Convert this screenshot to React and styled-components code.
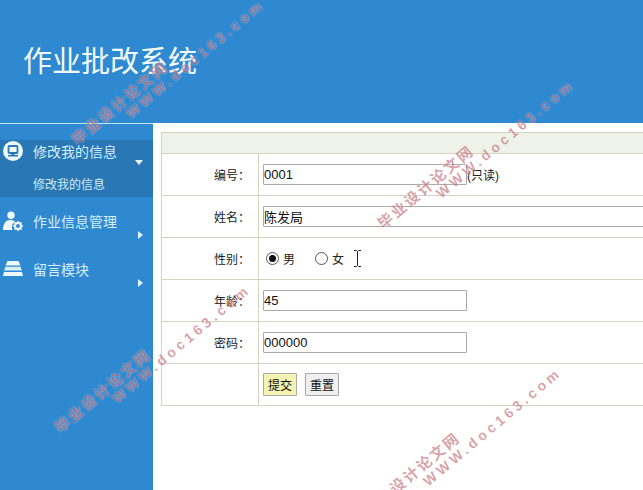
import React from "react";
import styled, { createGlobalStyle } from "styled-components";

const GlobalStyle = createGlobalStyle`
  html, body {
    margin: 0;
    padding: 0;
    height: 100%;
    overflow: hidden;
    background: #fff;
  }
  body {
    font-family: "Liberation Sans", "Noto Sans CJK SC", sans-serif;
    font-size: 12px;
    color: #222;
  }
`;

const Page = styled.div`
  position: relative;
  width: 643px;
  height: 490px;
  overflow: hidden;
`;

const Header = styled.header`
  height: 123px;
  box-sizing: border-box;
  padding: 44px 0 0 23px;
  background: #2f89d1;
`;

const Title = styled.h1`
  margin: 0;
  font-family: "Liberation Serif", "Noto Sans CJK SC", serif;
  font-size: 29px;
  line-height: 36px;
  font-weight: 400;
  color: #f2fbff;
`;

const Body = styled.div`
  display: flex;
  height: 367px;
`;

const Sidebar = styled.nav`
  flex: 0 0 153px;
  box-sizing: border-box;
  padding-top: 16px;
  border-top: 1px solid #bfeaf5;
  background: #2f89d1;
`;

const MenuGroup = styled.div`
  height: ${(p) => p.$height}px;
  background: ${(p) => (p.$open ? "#2a77b5" : "transparent")};
`;

const MenuHead = styled.div`
  position: relative;
  display: flex;
  align-items: center;
  gap: 10px;
  height: 22px;
  padding: ${(p) => p.$top}px 0 0 3px;
  color: #d3f0fb;
  font-size: 14px;
`;

const MenuIcon = styled.svg`
  flex: 0 0 20px;
  width: 20px;
  height: 20px;
`;

const Arrow = styled.i`
  position: absolute;
  width: 0;
  height: 0;
  border-style: solid;
  ${(p) =>
    p.$down
      ? `right: 10px; top: 20px;
         border-width: 5px 4px 0 4px;
         border-color: #e4f6fc transparent transparent transparent;`
      : `right: 10px; top: 34px;
         border-width: 4.500px 0 4.500px 5px;
         border-color: transparent transparent transparent #e4f6fc;`}
`;

const SubItem = styled.div`
  padding: 14px 0 0 33px;
  color: #cdebf7;
  font-size: 12px;
  line-height: 18px;
`;

const Main = styled.main`
  flex: 1;
  min-width: 0;
  padding: 9px 0 0 8px;
`;

const Table = styled.table`
  width: 560px;
  border-collapse: collapse;
  table-layout: fixed;
`;

const LabelColumn = styled.col`
  width: 97px;
`;

const HeadCell = styled.td`
  height: 20px;
  padding: 0;
  border: 1px solid #d3d3bf;
  background: #eef2e9;
`;

const Row = styled.tr`
  height: 42px;
`;

const LabelCell = styled.td`
  box-sizing: border-box;
  padding: 0 8px 0 0;
  border: 1px solid #d3d3bf;
  text-align: right;
  font-size: 12px;
`;

const FieldCell = styled.td`
  padding: 0 0 0 4px;
  border: 1px solid #d3d3bf;
  white-space: nowrap;
  font-size: 12px;
`;

const TextInput = styled.input`
  width: ${(p) => p.$width}px;
  height: 21px;
  box-sizing: border-box;
  margin: 0;
  padding: 0;
  border: 1px solid #a9a9a9;
  border-radius: 1px;
  background: #fff;
  color: #111;
  font-family: "Liberation Sans", "Noto Sans CJK SC", sans-serif;
  font-size: 13px;
  vertical-align: middle;
`;

const Note = styled.span`
  vertical-align: -2px;
`;

const RadioLabel = styled.label`
  display: inline-flex;
  align-items: center;
  gap: 4px;
  margin: 0 20px 0 3px;
  font-size: 12px;
  vertical-align: middle;
  &:last-of-type {
    margin-left: 0;
    margin-right: 0;
  }
`;

const RadioDot = styled.span`
  position: relative;
  width: 11px;
  height: 11px;
  border: 1px solid #555;
  border-radius: 50%;
  background: #fff;
  ${(p) =>
    p.$checked &&
    `&::after {
      content: "";
      position: absolute;
      left: 2px;
      top: 2px;
      width: 7px;
      height: 7px;
      border-radius: 50%;
      background: #111;
    }`}
`;

const TextCursor = styled.svg`
  width: 9px;
  height: 17px;
  margin-left: 9px;
  vertical-align: middle;
`;

const Button = styled.button`
  width: 34px;
  height: 23px;
  box-sizing: border-box;
  margin: 0 8px 0 0;
  padding: 0;
  border: 1px solid #a9a9a9;
  border-radius: 1px;
  background: ${(p) => (p.$primary ? "#f5f3b0" : "#efeff0")};
  color: #111;
  font-family: "Liberation Sans", "Noto Sans CJK SC", sans-serif;
  font-size: 12px;
  vertical-align: middle;
`;

// the watermark sits over the page, so its red turns purple on the blue parts
const Stamp = styled.span`
  position: absolute;
  left: ${(p) => p.$x}px;
  top: ${(p) => p.$y}px;
  transform: rotate(-40deg);
  transform-origin: left center;
  white-space: nowrap;
  font-family: "Liberation Sans", "Noto Sans CJK SC", sans-serif;
  font-weight: 700;
  line-height: 16px;
  pointer-events: none;
  color: rgba(175, 55, 70, 0.48);
  text-shadow: 0 0 2px rgba(255, 255, 255, 0.55);
  font-size: ${(p) => (p.$url ? 14 : 15)}px;
  letter-spacing: ${(p) => (p.$url ? 3.7 : 2.2)}px;
`;

const stamps = [
  { x: 74, y: 134 },
  { x: 128, y: 107, url: true },
  { x: 380, y: 218 },
  { x: 438, y: 187, url: true },
  { x: 57, y: 422 },
  { x: 114, y: 392, url: true },
  { x: 366, y: 505 },
  { x: 425, y: 475, url: true },
];

function ScreenIcon() {
  return (
    <MenuIcon viewBox="0 0 20 20">
      <circle cx="10" cy="10" r="10" fill="#eef9fd" />
      <rect x="5.500" y="5" width="9" height="7" rx="1" fill="none" stroke="#2a77b5" strokeWidth="1.800" />
      <path d="M8.500 12.500h3v1.500h-3zM5 14h10v1.600H5z" fill="#2a77b5" />
    </MenuIcon>
  );
}

function UserGearIcon() {
  return (
    <MenuIcon viewBox="0 0 20 20">
      <circle cx="8" cy="4.200" r="3.700" fill="#eef9fd" />
      <path d="M0 19c0-6 2.500-10 7.500-10 2 0 3.500.6 4.600 1.700-2.600 1.400-3.800 5-2.600 8.300z" fill="#eef9fd" />
      <circle cx="15" cy="15" r="3" fill="none" stroke="#eef9fd" strokeWidth="2" />
      <path d="M15 10v2M15 18v2M10 15h2M18 15h2M11.500 11.500l1.400 1.400M17.100 17.100l1.400 1.400M18.500 11.500l-1.400 1.400M12.900 17.100l-1.400 1.400" stroke="#eef9fd" strokeWidth="1.600" />
    </MenuIcon>
  );
}

function LayersIcon() {
  return (
    <MenuIcon viewBox="0 0 20 20">
      <path d="M4.500 2h11l2 4.500H2.500z" fill="#eef9fd" />
      <path d="M2.500 7.800h15l1.500 3.700H1z" fill="#d7f0fa" />
      <path d="M1 13h18l1 4H0z" fill="#eef9fd" />
    </MenuIcon>
  );
}

export default function App() {
  return (
    <Page>
      <GlobalStyle />
      <Header>
        <Title>作业批改系统</Title>
      </Header>
      <Body>
        <Sidebar>
          <MenuGroup $open $height={57}>
            <MenuHead $top={0}>
              <ScreenIcon />
              修改我的信息
              <Arrow $down />
            </MenuHead>
            <SubItem>修改我的信息</SubItem>
          </MenuGroup>
          <MenuGroup $height={48}>
            <MenuHead $top={13}>
              <UserGearIcon />
              作业信息管理
              <Arrow />
            </MenuHead>
          </MenuGroup>
          <MenuGroup $height={48}>
            <MenuHead $top={13}>
              <LayersIcon />
              留言模块
              <Arrow />
            </MenuHead>
          </MenuGroup>
        </Sidebar>
        <Main>
          <Table>
            <colgroup>
              <LabelColumn />
              <col />
            </colgroup>
            <tbody>
              <tr>
                <HeadCell colSpan={2} />
              </tr>
              <Row>
                <LabelCell>编号：</LabelCell>
                <FieldCell>
                  <TextInput $width={204} defaultValue="0001" readOnly />
                  <Note>(只读)</Note>
                </FieldCell>
              </Row>
              <Row>
                <LabelCell>姓名：</LabelCell>
                <FieldCell>
                  <TextInput $width={460} defaultValue="陈发局" />
                </FieldCell>
              </Row>
              <Row>
                <LabelCell>性别：</LabelCell>
                <FieldCell>
                  <RadioLabel>
                    <RadioDot $checked />男
                  </RadioLabel>
                  <RadioLabel>
                    <RadioDot />女
                  </RadioLabel>
                  <TextCursor viewBox="0 0 9 17">
                    <path d="M1 .5h2.500l1 1 1-1H8M4.500 1.500v14M1 16.500h2.500l1-1 1 1H8" fill="none" stroke="#222" />
                  </TextCursor>
                </FieldCell>
              </Row>
              <Row>
                <LabelCell>年龄：</LabelCell>
                <FieldCell>
                  <TextInput $width={204} defaultValue="45" />
                </FieldCell>
              </Row>
              <Row>
                <LabelCell>密码：</LabelCell>
                <FieldCell>
                  <TextInput $width={204} defaultValue="000000" />
                </FieldCell>
              </Row>
              <Row>
                <LabelCell />
                <FieldCell>
                  <Button $primary>提交</Button>
                  <Button>重置</Button>
                </FieldCell>
              </Row>
            </tbody>
          </Table>
        </Main>
      </Body>
      {stamps.map((s) => (
        <Stamp key={`${s.x}-${s.y}`} $x={s.x} $y={s.y} $url={s.url}>
          {s.url ? "WWW.doc163.com" : "毕业设计论文网"}
        </Stamp>
      ))}
    </Page>
  );
}
